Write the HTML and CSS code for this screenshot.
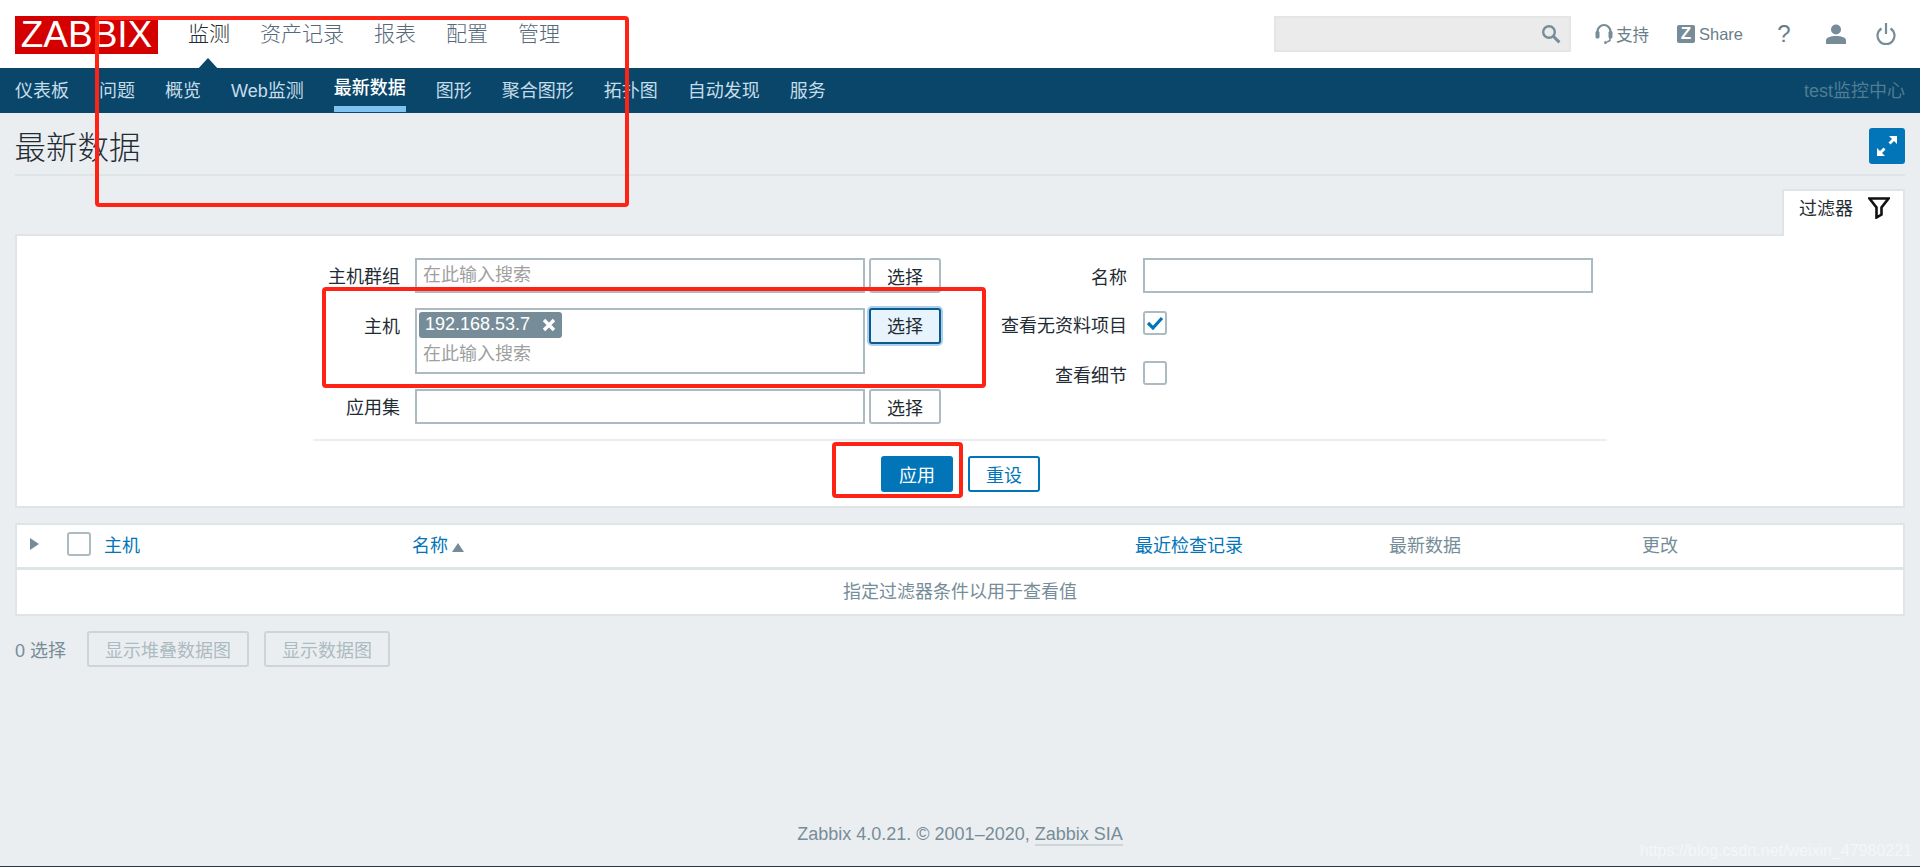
FILE: index.html
```html
<!DOCTYPE html>
<html lang="zh-CN">

<head>
    <meta charset="UTF-8">
    <title>最新数据</title>
    <link rel="stylesheet" href="styles.css">
</head>

<body>
    <header class="top-bar">
        <a class="logo">ZABBIX</a>
        <nav class="main-nav">
            <a class="active">监测</a>
            <a>资产记录</a>
            <a>报表</a>
            <a>配置</a>
            <a>管理</a>
        </nav>
        <div class="search-box">
            <svg width="20" height="20" viewBox="0 0 20 20">
                <circle cx="8" cy="8" r="5.8" fill="none" stroke="#768d99" stroke-width="2.4" />
                <path d="M12.3 12.3L18.4 18.4" stroke="#768d99" stroke-width="3" />
            </svg>
        </div>
        <div class="top-links">
            <a class="top-link">
                <svg width="18" height="24" viewBox="0 0 18 24">
                    <path d="M2.5 15V9.500a6.500 6.500 0 0 1 13 0V15" fill="none" stroke="#768d99" stroke-width="2.200" />
                    <rect x="0.500" y="9" width="4" height="7.500" rx="1.500" fill="#768d99" />
                    <rect x="13.500" y="9" width="4" height="7.500" rx="1.500" fill="#768d99" />
                    <path d="M15 16v2.500l-3 1.500" fill="none" stroke="#768d99" stroke-width="1.500" />
                    <circle cx="10.500" cy="20.500" r="1.500" fill="#768d99" />
                </svg>
                支持
            </a>
            <a class="top-link share-link"><span class="z-icon">Z</span>Share</a>
            <a class="top-icon help-icon">?</a>
            <a class="top-icon user-icon">
                <svg width="20" height="20" viewBox="0 0 20 20">
                    <circle cx="10" cy="5.500" r="5" fill="#768d99" />
                    <path d="M0 20v-3.500c0-3 4-4.500 10-4.500s10 1.500 10 4.500V20z" fill="#768d99" />
                </svg>
            </a>
            <a class="top-icon">
                <svg width="20" height="22" viewBox="0 0 20 22">
                    <path d="M5.500 5.500a8.500 8.500 0 1 0 9 0" fill="none" stroke="#768d99" stroke-width="2.200" />
                    <path d="M10 0v11" stroke="#768d99" stroke-width="2.200" />
                </svg>
            </a>
        </div>
    </header>

    <nav class="sub-nav">
        <a>仪表板</a>
        <a>问题</a>
        <a>概览</a>
        <a>Web监测</a>
        <a class="active">最新数据</a>
        <a>图形</a>
        <a>聚合图形</a>
        <a>拓扑图</a>
        <a>自动发现</a>
        <a>服务</a>
        <span class="server-name">test监控中心</span>
    </nav>

    <main class="content">
        <div class="title-row">
            <h1>最新数据</h1>
            <button class="expand-btn">
                <svg width="22" height="22" viewBox="0 0 22 22">
                    <path d="M21 1h-8l3 3-3.500 3.500 2 2L18 6l3 3z" fill="#fff" />
                    <path d="M1 21h8l-3-3 3.500-3.500-2-2L4 16l-3-3z" fill="#fff" />
                </svg>
            </button>
        </div>

        <div class="tab-row">
            <div class="filter-tab">
                过滤器
                <svg width="22" height="22" viewBox="0 0 22 22">
                    <path d="M1.500 1.500h19l-7 9v7l-5 3v-10z" fill="none" stroke="#111" stroke-width="2.600" />
                </svg>
            </div>
        </div>

        <section class="filter-box">
            <div class="filter-fields">
                <div class="filter-left">
                    <label>主机群组</label>
                    <input type="text" placeholder="在此输入搜索">
                    <button class="btn-grey">选择</button>

                    <label>主机</label>
                    <div class="multi-select">
                        <span class="chip">192.168.53.7
                            <svg width="14" height="14" viewBox="0 0 14 14">
                                <path d="M2 2l10 10M12 2L2 12" stroke="#fff" stroke-width="3.400" />
                            </svg>
                        </span>
                        <input type="text" placeholder="在此输入搜索">
                    </div>
                    <button class="btn-grey focused">选择</button>

                    <label>应用集</label>
                    <input type="text">
                    <button class="btn-grey">选择</button>
                </div>
                <div class="filter-right">
                    <div class="field-row">
                        <label>名称</label>
                        <input type="text">
                    </div>
                    <div class="field-row check-row">
                        <label>查看无资料项目</label>
                        <span class="checkbox">
                            <svg width="18" height="16" viewBox="0 0 18 16">
                                <path d="M2 8l5 5 9-10" fill="none" stroke="#0275b8" stroke-width="3.200" />
                            </svg>
                        </span>
                    </div>
                    <div class="field-row check-row">
                        <label>查看细节</label>
                        <span class="checkbox"></span>
                    </div>
                </div>
            </div>
            <div class="filter-actions">
                <button class="btn-main">应用</button>
                <button class="btn-alt">重设</button>
            </div>
        </section>

        <section class="data-table">
            <div class="table-head">
                <span class="arrow-right"></span>
                <span class="checkbox"></span>
                <a>主机</a>
                <a>名称<span class="arrow-up"></span></a>
                <a>最近检查记录</a>
                <span class="plain-head">最新数据</span>
                <span class="plain-head">更改</span>
            </div>
            <div class="table-empty">指定过滤器条件以用于查看值</div>
        </section>

        <div class="selected-row">
            <span class="selected-count">0 选择</span>
            <button class="btn-disabled">显示堆叠数据图</button>
            <button class="btn-disabled">显示数据图</button>
        </div>
    </main>

    <footer class="page-footer">Zabbix 4.0.21. © 2001–2020, <a>Zabbix SIA</a></footer>

    <!-- annotations drawn over the screenshot -->
    <div class="mark mark-nav"></div>
    <div class="mark mark-host"></div>
    <div class="mark mark-apply"></div>
    <div class="watermark">https://blog.csdn.net/weixin_47980221</div>
</body>

</html>
```

FILE: styles.css
```css
* {
    box-sizing: border-box;
}

html,
body {
    height: 867px;
    overflow: hidden;
}

body {
    position: relative;
    display: flex;
    flex-direction: column;
    margin: 0;
    background: #ebeef0;
    border-bottom: 1px solid #2b3a42;
    font-family: "Liberation Sans", "Noto Sans CJK SC", sans-serif;
    font-size: 18px;
    color: #1f2c33;
}

button,
input {
    font: inherit;
}

/* top bar */
.top-bar {
    display: flex;
    align-items: center;
    height: 68px;
    padding: 0 24px 0 15px;
    background: #fff;
}

.logo {
    width: 143px;
    height: 38px;
    margin-top: 1px;
    background: #d40000;
    color: #fff;
    font-size: 37px;
    line-height: 38px;
    text-align: center;
}

.main-nav {
    display: flex;
    gap: 30px;
    margin-left: 30px;
    padding-bottom: 5px;
    font-size: 21px;
    font-weight: 300;
    color: #55697a;
}

.main-nav a {
    position: relative;
}

.main-nav a.active {
    color: #1f2c33;
}

.main-nav a.active::after {
    content: "";
    position: absolute;
    left: 8px;
    bottom: -24px;
    border-left: 12px solid transparent;
    border-right: 12px solid transparent;
    border-bottom: 13px solid #0a466a;
}

.search-box {
    display: flex;
    align-items: center;
    justify-content: flex-end;
    width: 297px;
    height: 36px;
    margin-left: auto;
    padding-right: 8px;
    background: #ebebeb;
    border: 2px solid #e5e5e5;
}

.top-links {
    display: flex;
    align-items: center;
    margin-left: 24px;
    font-size: 16.5px;
    color: #687e8a;
}

.top-link {
    display: flex;
    align-items: center;
    gap: 3px;
}

.share-link {
    gap: 4px;
    margin-left: 28px;
}

.z-icon {
    width: 18px;
    height: 18px;
    background: #768d99;
    border-radius: 2px;
    color: #fff;
    font-size: 17px;
    font-weight: bold;
    line-height: 18px;
    text-align: center;
}

.top-icon {
    display: flex;
    justify-content: center;
    width: 20px;
    margin-left: 30px;
}

.help-icon {
    font-size: 24px;
    margin-left: 31px;
}

.user-icon {
    margin-left: 32px;
}

/* second level menu */
.sub-nav {
    display: flex;
    align-items: center;
    gap: 30px;
    height: 45px;
    padding: 0 15px 4px;
    background: #0a466a;
    color: #c5dde9;
}

.sub-nav a.active {
    color: #fff;
    font-weight: 500;
    align-self: flex-start;
    line-height: 41px;
    border-bottom: 6px solid #7fc4f0;
    height: 44px;
}

.server-name {
    margin-left: auto;
    color: #4f7d93;
}

/* page */
.content {
    padding: 15px 15px 0;
}

.title-row {
    display: flex;
    justify-content: space-between;
    height: 48px;
    border-bottom: 2px solid #dfe4e7;
}

h1 {
    margin: 0 0 0 -0.5px;
    font-size: 31.5px;
    font-weight: 300;
    line-height: 40px;
}

.expand-btn {
    display: flex;
    align-items: center;
    justify-content: center;
    width: 36px;
    height: 36px;
    padding: 0;
    background: #0275b8;
    border: none;
    border-radius: 3px;
}

.tab-row {
    display: flex;
    justify-content: flex-end;
    margin-top: 13px;
}

.filter-tab {
    display: flex;
    gap: 14px;
    width: 123px;
    height: 47px;
    margin-bottom: -2px;
    padding: 3px 0 0 15px;
    position: relative;
    background: #fff;
    border: 2px solid #dfe4e7;
    border-bottom: none;
}

.filter-tab svg {
    margin: 3px 0 0 1px;
}

.filter-box {
    padding: 22px 0 14px;
    background: #fff;
    border: 2px solid #dfe4e7;
}

.filter-fields {
    display: flex;
    width: 1294px;
    margin-left: 296px;
    padding-bottom: 15px;
    border-bottom: 2px solid #ebeef0;
}

.filter-left {
    display: grid;
    grid-template-columns: 98px 450px 72px;
    column-gap: 4px;
    row-gap: 15px;
    align-items: start;
}

.filter-left label {
    height: 35px;
    padding: 2px 11px 0 0;
    line-height: 35px;
    text-align: right;
}

.filter-right {
    display: flex;
    flex-direction: column;
    gap: 15px;
}

.field-row {
    display: flex;
    align-items: center;
    gap: 16px;
}

.field-row label {
    width: 186px;
    text-align: right;
}

.check-row label {
    padding-top: 2px;
}

.check-row {
    height: 30px;
}

.check-row + .check-row {
    height: 40px;
}

input {
    width: 450px;
    height: 35px;
    padding: 0 6px;
    background: #fff;
    border: 2px solid #acbbc2;
    outline: none;
    color: #1f2c33;
}

input::placeholder {
    color: #a0a0a0;
    opacity: 1;
}

.multi-select {
    display: flex;
    flex-direction: column;
    align-items: flex-start;
    height: 66px;
    padding: 2px;
    border: 2px solid #acbbc2;
}

.multi-select input {
    width: 100%;
    height: 33px;
    margin-top: 1px;
    padding: 0 4px;
    border: none;
}

.chip {
    display: flex;
    align-items: center;
    gap: 12px;
    height: 27px;
    padding: 0 6px;
    background: #768d99;
    border-radius: 3px;
    color: #fff;
}

.checkbox {
    display: flex;
    align-items: center;
    justify-content: center;
    width: 24px;
    height: 24px;
    background: #fff;
    border: 2px solid #acbbc2;
    border-radius: 3px;
}

.btn-grey,
.btn-main,
.btn-alt,
.btn-disabled {
    height: 36px;
    padding: 0 16px;
    border-radius: 3px;
}

.btn-grey {
    height: 35px;
    background: #fff;
    border: 2px solid #acbbc2;
    color: #1f2c33;
}

.btn-grey.focused {
    height: 36px;
    padding-bottom: 2px;
    background: #e8f4fd;
    border-color: #0a5a8c;
    box-shadow: 0 0 0 2px #a9d1ef;
}

.filter-actions {
    display: flex;
    justify-content: center;
    gap: 15px;
    padding: 15px 0 0 1px;
}

.btn-main {
    background: #0275b8;
    border: 2px solid #0275b8;
    color: #fff;
}

.btn-alt {
    background: #fff;
    border: 2px solid #0275b8;
    color: #0275b8;
}

/* table */
.data-table {
    margin-top: 15px;
    background: #fff;
    border: 2px solid #dfe4e7;
}

.table-head {
    display: grid;
    grid-template-columns: 37px 37px 308px 723px 254px 253px 1fr;
    align-items: center;
    height: 45px;
    padding: 0 0 5px 13px;
    border-bottom: 3px solid #dfe4e7;
    color: #0275b8;
}

.plain-head {
    color: #768d99;
}

.arrow-right {
    width: 0;
    height: 0;
    border-left: 9px solid #768d99;
    border-top: 6px solid transparent;
    border-bottom: 6px solid transparent;
}

.arrow-up {
    display: inline-block;
    margin-left: 4px;
    border-left: 6px solid transparent;
    border-right: 6px solid transparent;
    border-bottom: 9px solid #768d99;
}

.table-empty {
    height: 44px;
    line-height: 44px;
    text-align: center;
    color: #768d99;
}

.selected-row {
    display: flex;
    align-items: center;
    gap: 15px;
    margin-top: 15px;
}

.selected-count {
    width: 57px;
    color: #768d99;
}

.btn-disabled {
    background: #ebeef0;
    border: 2px solid #cdd5d9;
    color: #acbbc2;
}

.page-footer {
    margin-top: auto;
    padding-bottom: 21px;
    text-align: center;
    color: #768d99;
}

.page-footer a {
    border-bottom: 2px solid #cdd5d9;
}

/* red boxes and watermark */
.mark {
    position: absolute;
    border: 4px solid #ff2316;
    border-radius: 4px;
}

.mark-nav {
    left: 95px;
    top: 16px;
    width: 534px;
    height: 191px;
}

.mark-host {
    left: 322px;
    top: 287px;
    width: 664px;
    height: 101px;
}

.mark-apply {
    left: 832px;
    top: 442px;
    width: 131px;
    height: 56px;
}

.watermark {
    position: absolute;
    right: 8px;
    bottom: 6px;
    color: #f4f6f7;
    font-size: 16px;
}
```
